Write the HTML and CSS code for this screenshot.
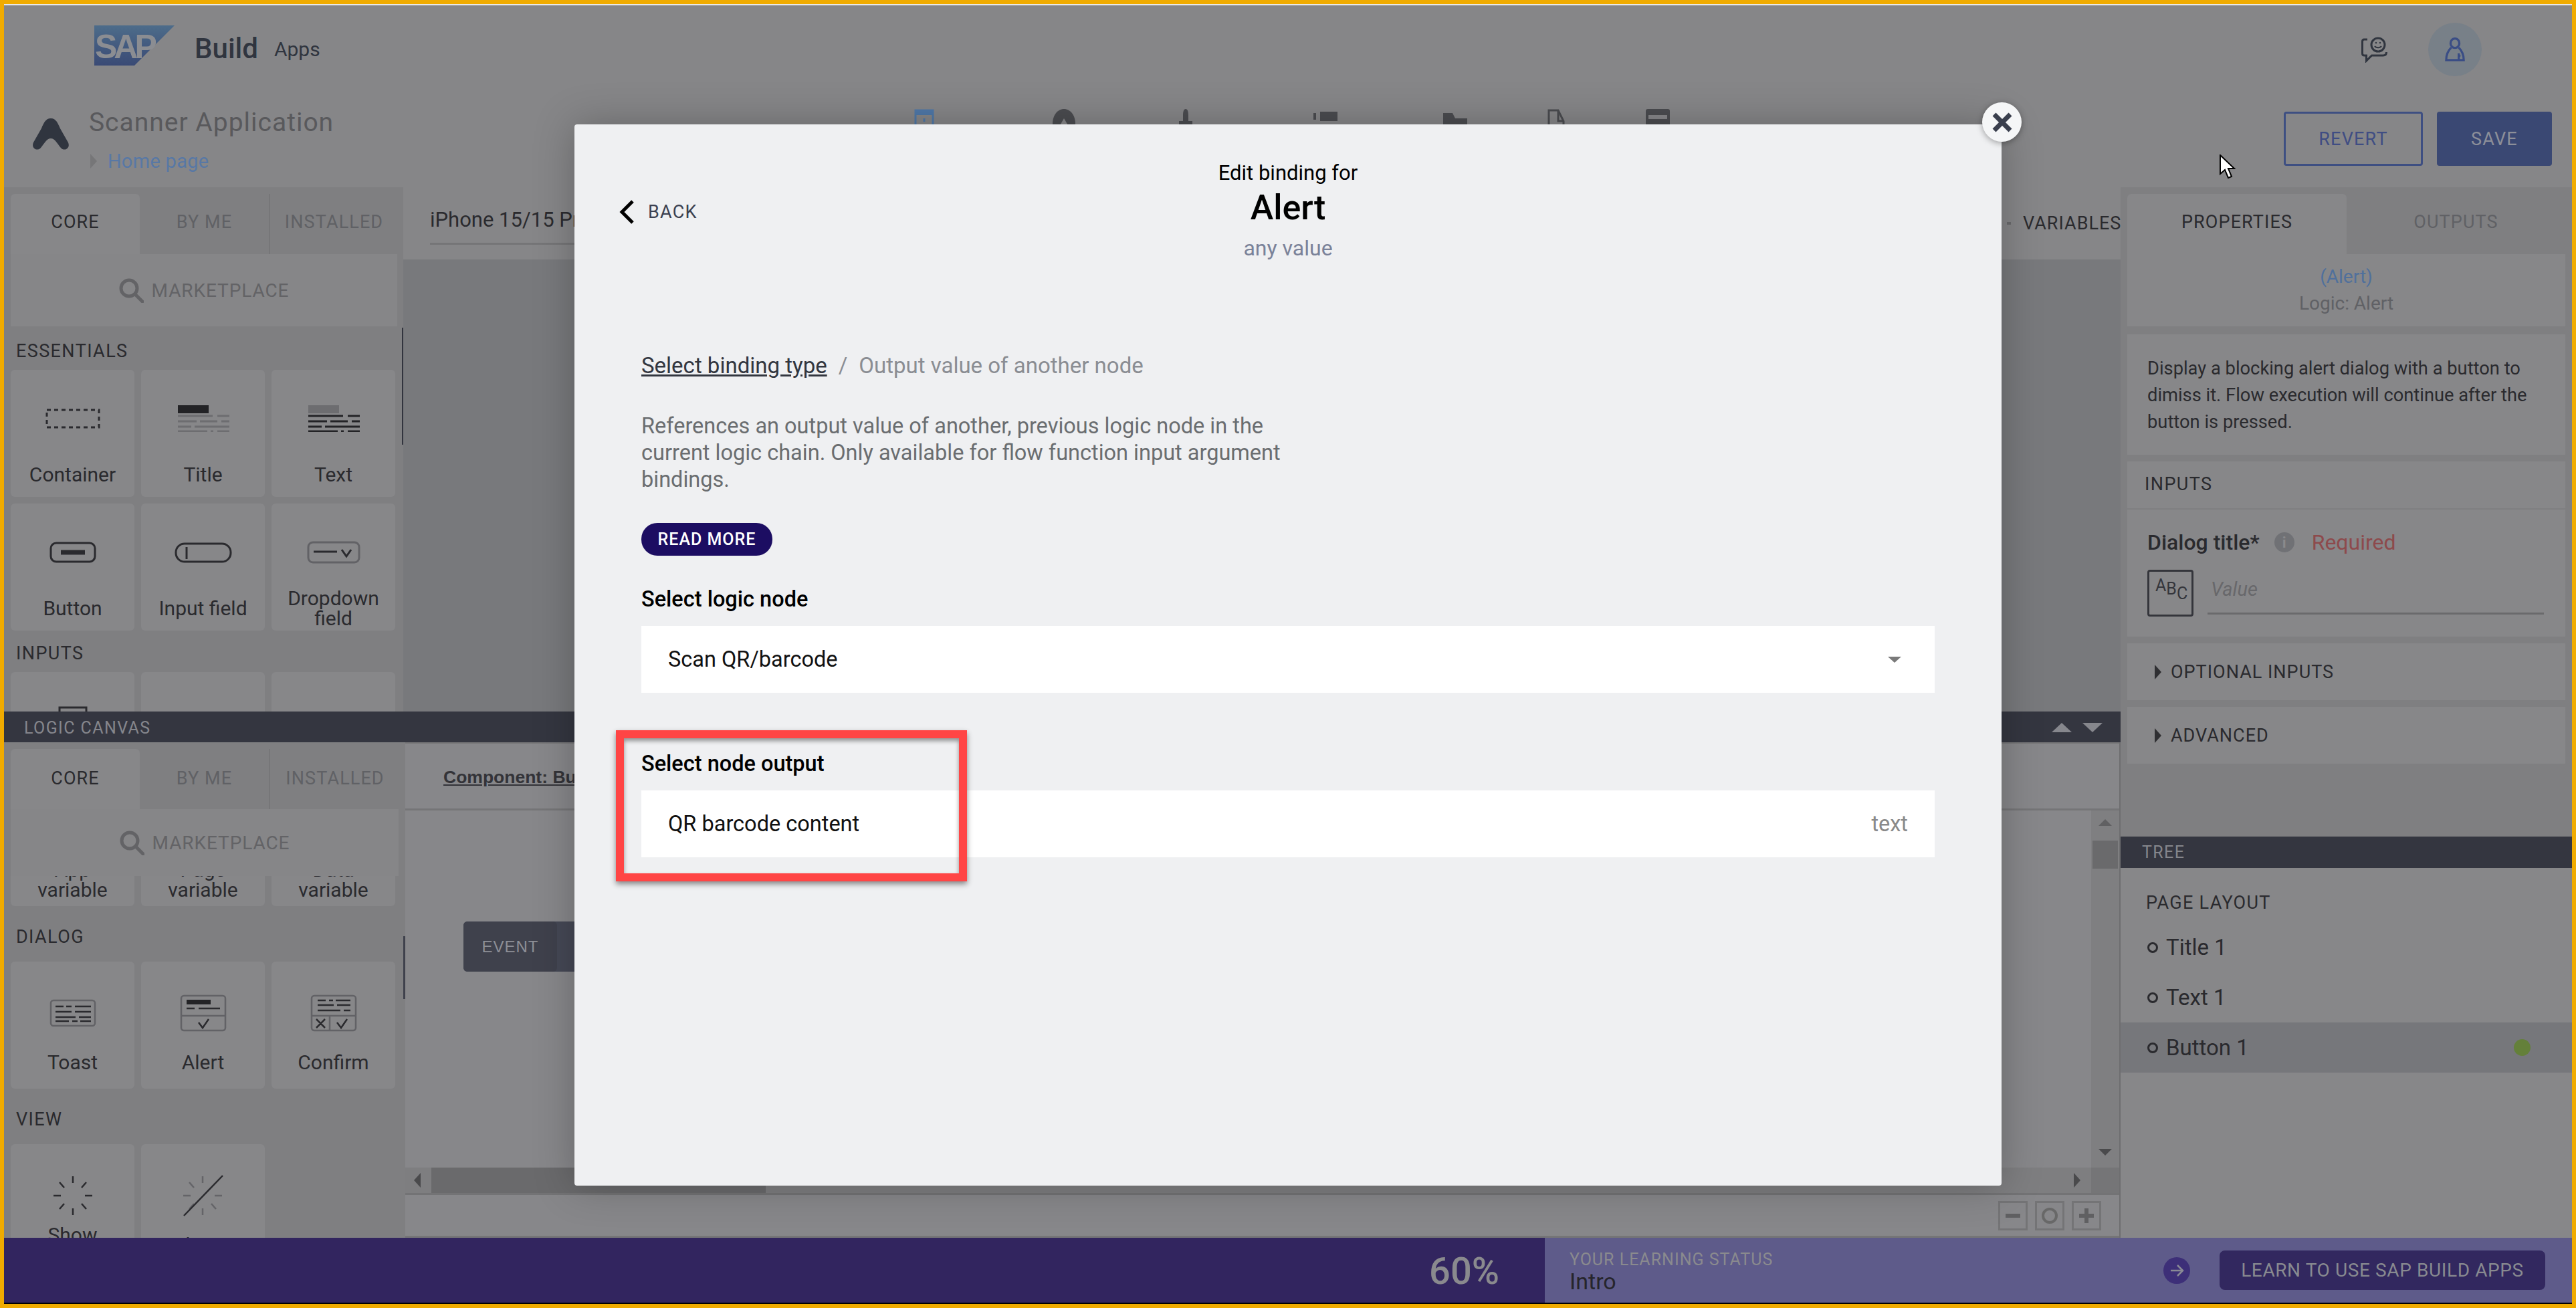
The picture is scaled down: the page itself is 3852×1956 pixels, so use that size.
FILE: index.html
```html
<!DOCTYPE html>
<html lang="en">
<head>
    <meta charset="UTF-8">
    <meta name="viewport" content="width=device-width, initial-scale=1.0">
    <title>SAP Build Apps</title>
    <link rel="stylesheet" href="styles.css">
</head>
<body>
<div class="frame">
    <header class="app-head">
        <div class="brand-row">
            <svg class="sap-logo" viewBox="0 0 120 60">
                <defs><linearGradient id="sapFill" x1="0" y1="0" x2="0" y2="1"><stop offset="0" stop-color="#4d6c8a"/><stop offset="1" stop-color="#3a4a75"/></linearGradient></defs>
                <polygon points="0,0 120,0 60,60 0,60" fill="url(#sapFill)"/>
                <text x="1" y="49" font-family="Liberation Sans" font-weight="700" font-size="50" letter-spacing="-5" fill="#8b8d92">SAP</text>
            </svg>
            <span class="brand-name">Build</span>
            <span class="brand-sub">Apps</span>
            <svg class="feedback-icon" viewBox="0 0 40 40" fill="none" stroke="#30353f" stroke-width="3">
                <circle cx="25" cy="13" r="10"/>
                <circle cx="22" cy="10" r="1.2" fill="#30353f" stroke="none"/>
                <circle cx="28" cy="10" r="1.2" fill="#30353f" stroke="none"/>
                <path d="M20 15c2 3 8 3 10 0" stroke-width="2"/>
                <path d="M9 5H4C2 5 1.500 6 1.500 8v18c0 2 1 3 3 3h3v8l8-8h17c3 0 5-1 5-5"/>
            </svg>
            <div class="avatar">
                <svg viewBox="0 0 32 38" width="30" height="36" fill="none" stroke="#3a4d85" stroke-width="3.500">
                    <ellipse cx="16" cy="9" rx="7" ry="7.500"/>
                    <path d="M10 16C4 22 2 28 2 36h28c0-8-2-14-8-20"/>
                    <path d="M22 25v11"/>
                    <circle cx="23" cy="29" r="2" fill="#3a4d85" stroke="none"/>
                </svg>
            </div>
        </div>
        <div class="app-row">
            <svg class="app-logo" viewBox="0 0 56 48"><path d="M28 0C36 0 39 8 42 15L54 36C58 45 48 50 43 44C38 38 34 30 28 30C22 30 18 38 13 44C8 50-2 45 2 36L14 15C17 8 20 0 28 0Z" fill="#30353f"/></svg>
            <div class="app-title">
                <div class="app-name">Scanner Application</div>
                <div class="app-page"><i class="tri-right tri-grey"></i>Home page</div>
            </div>
            <nav class="view-nav">
                <svg viewBox="0 0 30 40" fill="none" stroke="#4f78a8" stroke-width="3"><rect x="2" y="2" width="26" height="36"/><path d="M2 6h26" stroke-width="6"/><path d="M15 14v5M9 25v6M15 25v6M21 25v6"/></svg>
                <svg viewBox="0 0 34 40"><path d="M17 0C27 0 34 10 34 22S27 40 17 40 0 34 0 22 7 0 17 0Z" fill="#4b4c50"/><path d="M17 14l7 12h-5v12h-4V26h-5Z" fill="#87878a"/></svg>
                <svg viewBox="0 0 20 40"><path d="M10 0c3 0 4 4 4 10v8h6v12h-6v10h-2V30H8v10H6V30H0V18h6v-8c0-6 1-10 4-10Z" fill="#4b4c50"/></svg>
                <svg viewBox="0 0 36 40" fill="#4b4c50"><rect x="0" y="6" width="4" height="10"/><rect x="10" y="4" width="26" height="14"/><rect x="0" y="28" width="4" height="10"/><rect x="10" y="26" width="26" height="14"/></svg>
                <svg viewBox="0 0 36 40" fill="#4b4c50"><path d="M0 6h14l4 8h18v26H0Z"/></svg>
                <svg viewBox="0 0 26 40" fill="none" stroke="#4b4c50" stroke-width="3"><path d="M2 40V2h14l8 16v22Z"/><path d="M16 2v16h8" /></svg>
                <svg viewBox="0 0 36 40" fill="#4b4c50"><rect width="36" height="40" rx="3"/><path d="M4 12h28M4 26h28" stroke="#87878a" stroke-width="6"/></svg>
            </nav>
            <div class="head-actions">
                <button class="btn-revert">REVERT</button>
                <button class="btn-save">SAVE</button>
            </div>
        </div>
    </header>

    <div class="workspace">
        <div class="work-main">
            <section class="view-editor">
                <aside class="palette palette-scroll">
                    <div class="tabs">
                        <div class="tab active">CORE</div>
                        <div class="tab">BY ME</div>
                        <div class="tab tab-line">INSTALLED</div>
                    </div>
                    <div class="market">
                        <svg class="search-icon" viewBox="0 0 37 37" fill="none" stroke="#636366" stroke-width="5"><circle cx="15" cy="15" r="12"/><path d="M24 24l11 11" stroke-linecap="round"/></svg>
                        MARKETPLACE
                    </div>
                    <div class="palette-list">
                        <div class="section-label section-first">ESSENTIALS</div>
                        <div class="card-grid">
                            <div class="card">
                                <div class="card-icon"><svg width="82" height="30" fill="none" stroke="#2a2a2e" stroke-width="3" stroke-dasharray="6 5"><rect x="2" y="2" width="78" height="26"/></svg></div>
                                <div class="card-label">Container</div>
                            </div>
                            <div class="card">
                                <div class="card-icon"><svg width="78" height="40"><rect x="1" width="46" height="12" fill="#232326"/><path d="M1 16h52M60 16h18M1 24h28M34 24h26M66 24h12M1 32h20M26 32h52M1 39h44M50 39h4M60 39h18" stroke="#6d6d70" stroke-width="3"/></svg></div>
                                <div class="card-label">Title</div>
                            </div>
                            <div class="card">
                                <div class="card-icon"><svg width="78" height="40"><rect x="1" width="46" height="12" fill="#6d6d70"/><path d="M1 16h52M60 16h18M1 24h28M34 24h26M66 24h12M1 32h20M26 32h52M1 39h44M50 39h4M60 39h18" stroke="#232326" stroke-width="3"/></svg></div>
                                <div class="card-label">Text</div>
                            </div>
                            <div class="card">
                                <div class="card-icon"><svg width="70" height="32" fill="none" stroke="#2a2a2e" stroke-width="3"><rect x="2" y="2" width="66" height="28" rx="8"/><path d="M17 16h36" stroke-width="7"/></svg></div>
                                <div class="card-label">Button</div>
                            </div>
                            <div class="card">
                                <div class="card-icon"><svg width="86" height="32" fill="none" stroke="#2a2a2e" stroke-width="3"><rect x="2" y="3" width="82" height="27" rx="13"/><path d="M18 8v18"/></svg></div>
                                <div class="card-label">Input field</div>
                            </div>
                            <div class="card">
                                <div class="card-icon"><svg width="80" height="34" fill="none" stroke="#2a2a2e" stroke-width="3"><rect x="2" y="2" width="76" height="30" rx="7" stroke="#626266"/><path d="M10 16h35M52 13l7 10 7-10"/></svg></div>
                                <div class="card-label">Dropdown field</div>
                            </div>
                        </div>
                        <div class="section-label">INPUTS</div>
                        <div class="card-grid">
                            <div class="card"><div class="card-icon"><svg width="44" height="60" fill="none" stroke="#2a2a2e" stroke-width="3"><rect x="2" y="10" width="40" height="48"/></svg></div></div>
                            <div class="card"></div>
                            <div class="card"></div>
                        </div>
                    </div>
                </aside>
                <div class="device-pane">
                    <div class="device-bar">
                        <div class="device-select">iPhone 15/15 Pro</div>
                        <div class="variables-tab">VARIABLES</div>
                    </div>
                    <div class="device-canvas"></div>
                </div>
            </section>

            <div class="logic-bar">
                <span>LOGIC CANVAS</span>
                <span class="logic-bar-arrows"><i class="tri-up"></i><i class="tri-down"></i></span>
            </div>

            <section class="logic-editor">
                <aside class="palette palette-logic">
                    <div class="tabs">
                        <div class="tab active">CORE</div>
                        <div class="tab">BY ME</div>
                        <div class="tab tab-line">INSTALLED</div>
                    </div>
                    <div class="market">
                        <svg class="search-icon" viewBox="0 0 37 37" fill="none" stroke="#636366" stroke-width="5"><circle cx="15" cy="15" r="12"/><path d="M24 24l11 11" stroke-linecap="round"/></svg>
                        MARKETPLACE
                    </div>
                    <div class="palette-list">
                        <div class="card-grid card-grid-cut">
                            <div class="card card-short"><div class="card-label">App variable</div></div>
                            <div class="card card-short"><div class="card-label">Page variable</div></div>
                            <div class="card card-short"><div class="card-label">Data variable</div></div>
                        </div>
                        <div class="section-label section-wide">DIALOG</div>
                        <div class="card-grid">
                            <div class="card card-short">
                                <div class="card-icon"><svg width="70" height="42" fill="none" stroke="#2a2a2e" stroke-width="2.500"><rect x="2" y="2" width="66" height="38" rx="4" stroke="#626266"/><path d="M9 11h12M25 11h8M38 11h24M9 19h24M38 19h24M9 27h30M44 27h18M9 33h20M34 33h8M46 33h16"/></svg></div>
                                <div class="card-label">Toast</div>
                            </div>
                            <div class="card card-short">
                                <div class="card-icon"><svg width="70" height="56" fill="none" stroke="#2a2a2e" stroke-width="2.500"><rect x="2" y="2" width="66" height="52" rx="4" stroke="#626266"/><path d="M2 32h66" stroke="#626266"/><rect x="10" y="8" width="36" height="7" fill="#232326" stroke="none"/><path d="M10 21h12M28 21h32M28 42l6 8 9-13"/></svg></div>
                                <div class="card-label">Alert</div>
                            </div>
                            <div class="card card-short">
                                <div class="card-icon"><svg width="70" height="56" fill="none" stroke="#2a2a2e" stroke-width="2.500"><rect x="2" y="2" width="66" height="52" rx="4" stroke="#626266"/><path d="M2 32h66M29 32v22" stroke="#626266"/><path d="M11 9h12M28 9h6M38 9h22M11 16h24M40 16h20M11 24h34M50 24h10M9 37l13 13M22 37L9 50M40 42l6 8 9-13"/></svg></div>
                                <div class="card-label">Confirm</div>
                            </div>
                        </div>
                        <div class="section-label section-wide">VIEW</div>
                        <div class="card-grid">
                            <div class="card card-short">
                                <div class="card-icon"><svg width="60" height="60" stroke="#2a2a2e" stroke-width="2.500"><path d="M30 1v10M30 49v10M1 30h11M48 30h11M10 10l7 8M50 10l-7 8M10 50l7-8M50 50l-7-8"/></svg></div>
                                <div class="card-label">Show<br>view</div>
                            </div>
                            <div class="card card-short">
                                <div class="card-icon"><svg width="62" height="62" stroke="#646468" stroke-width="2.500"><path d="M30 2v10M30 50v10M1 31h11M48 31h11M10 11l7 8M50 51l-7-8M10 51l7-8"/><path d="M2 61L60 1" stroke="#2a2a2e"/></svg></div>
                                <div class="card-label">Hide view</div>
                            </div>
                        </div>
                    </div>
                </aside>
                <div class="logic-main">
                    <div class="logic-head">Component: Button 1</div>
                    <div class="logic-body">
                        <div class="logic-canvas">
                            <div class="event-node"><span class="event-tag">EVENT</span></div>
                        </div>
                        <div class="vscroll">
                            <i class="tri-up tri-small"></i>
                            <div class="vscroll-thumb"></div>
                            <i class="tri-down tri-small tri-end"></i>
                        </div>
                    </div>
                    <div class="hscroll">
                        <i class="tri-left"></i>
                        <div class="hscroll-thumb"></div>
                        <i class="tri-right tri-dark"></i>
                        <div class="hscroll-corner"></div>
                    </div>
                    <div class="zoom-row">
                        <div class="zoom-btn"><b class="zoom-minus"></b></div>
                        <div class="zoom-btn"><b class="zoom-circle"></b></div>
                        <div class="zoom-btn"><b class="zoom-minus"></b><b class="zoom-plus"></b></div>
                    </div>
                </div>
            </section>
        </div>

        <aside class="side">
            <div class="side-props">
                <div class="tabs tabs-side">
                    <div class="tab active">PROPERTIES</div>
                    <div class="tab">OUTPUTS</div>
                </div>
                <div class="prop-box prop-info">
                    <div class="prop-alert">(Alert)</div>
                    <div>Logic: Alert</div>
                </div>
                <div class="prop-box prop-desc">Display a blocking alert dialog with a button to dimiss it. Flow execution will continue after the button is pressed.</div>
                <div class="prop-box prop-inputs">INPUTS</div>
                <div class="prop-box prop-field">
                    <div class="field-head">
                        <b>Dialog title*</b>
                        <span class="info-dot">i</span>
                        <span class="field-req">Required</span>
                    </div>
                    <div class="field-row">
                        <div class="abc-box"><span>A</span><span class="abc-b">B</span><span class="abc-c">C</span></div>
                        <div class="field-value">Value</div>
                    </div>
                </div>
                <div class="prop-box prop-fold"><i class="tri-right tri-dark"></i>OPTIONAL INPUTS</div>
                <div class="prop-box prop-fold"><i class="tri-right tri-dark"></i>ADVANCED</div>
            </div>
            <div class="tree-bar">TREE</div>
            <div class="tree">
                <div class="tree-title">PAGE LAYOUT</div>
                <div class="tree-row"><i class="tree-dot"></i>Title 1</div>
                <div class="tree-row"><i class="tree-dot"></i>Text 1</div>
                <div class="tree-row tree-selected"><i class="tree-dot"></i>Button 1<i class="tree-status"></i></div>
            </div>
        </aside>
    </div>

    <footer class="learn-bar">
        <div class="learn-percent">60%</div>
        <div class="learn-status">
            <div class="learn-text">
                <div class="learn-label">YOUR LEARNING STATUS</div>
                <div class="learn-step">Intro</div>
            </div>
            <div class="learn-arrow"><svg width="24" height="24" fill="none" stroke="#8a8a95" stroke-width="2.500"><path d="M3 12h18M13 4l8 8-8 8"/></svg></div>
            <button class="learn-btn">LEARN TO USE SAP BUILD APPS</button>
        </div>
    </footer>
</div>

<div class="modal">
    <div class="modal-head">
        <div class="modal-back">
            <svg width="24" height="36" fill="none" stroke="#000" stroke-width="5"><path d="M21 2L5 18l16 16"/></svg>
            BACK
        </div>
        <div class="modal-sup">Edit binding for</div>
        <div class="modal-title">Alert</div>
        <div class="modal-type">any value</div>
    </div>
    <div class="crumbs"><a>Select binding type</a><span class="crumb-sep">/</span><span>Output value of another node</span></div>
    <p class="modal-desc">References an output value of another, previous logic node in the<br>current logic chain. Only available for flow function input argument<br>bindings.</p>
    <button class="read-more">READ MORE</button>
    <div class="select-label select-label-first">Select logic node</div>
    <div class="select-box">Scan QR/barcode<i class="select-caret"></i></div>
    <div class="select-label select-label-second">Select node output</div>
    <div class="select-box">QR barcode content<span class="select-type">text</span></div>
</div>
<div class="modal-close"><svg width="30" height="30" stroke="#3a3f4d" stroke-width="7"><path d="M3 3l24 24M27 3L3 27"/></svg></div>
<div class="highlight"></div>
<svg class="cursor" width="26" height="38" viewBox="0 0 26 38"><path d="M2 1v28l7-6 5 12 5-2-5-12h9Z" fill="#fff" stroke="#000" stroke-width="2"/></svg>
</body>
</html>
```

FILE: styles.css
```css
* { margin: 0; padding: 0; box-sizing: border-box; }
html, body { width: 3852px; height: 1956px; overflow: hidden; }
body { font-family: Roboto, Arial, sans-serif; color: #2a2a2e; font-size: 28px; position: relative; background: #868688; }
i { display: block; font-style: normal; }

.frame { width: 3852px; height: 1956px; border: 6px solid #f0ab00; display: flex; flex-direction: column; background: #868688; }

/* Top header */
.app-head { height: 274px; border-top: 2px solid #e8e8e8; flex: none; }
.brand-row { height: 132px; display: flex; align-items: center; padding: 0 135px 0 135px; }
.sap-logo { width: 120px; height: 60px; margin-bottom: 12px; }
.brand-name { font-size: 42px; font-weight: 500; color: #30353f; margin-left: 30px; margin-bottom: 4px; }
.brand-sub { font-size: 30px; color: #30353f; margin-left: 24px; margin-bottom: 2px; }
.feedback-icon { width: 40px; height: 40px; margin-left: auto; }
.avatar { width: 80px; height: 80px; border-radius: 50%; background: #788088; margin-left: 60px; display: flex; align-items: center; justify-content: center; }

.app-row { height: 140px; display: flex; padding: 0 30px 0 42px; }
.app-logo { width: 56px; height: 48px; margin-top: 37px; }
.app-title { width: 1266px; padding: 17px 0 0 29px; }
.app-name { font-size: 39px; letter-spacing: 1px; color: #59595c; line-height: 52px; }
.app-page { font-size: 29px; letter-spacing: 0.3px; color: #5878a5; line-height: 40px; display: flex; align-items: center; margin-top: 12px; padding-left: 2px; }
.app-page .tri-right { margin-right: 16px; }

.view-nav { width: 2052px; display: grid; grid-template-columns: 207px 189px 201px 194px 156px 147px 40px; padding-top: 23px; align-items: start; }
.view-nav svg { height: 40px; }
.head-actions { display: flex; gap: 21px; padding-top: 27px; margin-left: auto; align-items: flex-start; }
.head-actions button { height: 81px; font-family: inherit; font-size: 27px; letter-spacing: 1.2px; border-radius: 4px; }
.btn-revert { width: 208px; background: none; border: 3px solid #3e4f82; color: #3f4d83; }
.btn-save { width: 172px; background: #3a4873; border: none; color: #8c8f99; }

/* Work area */
.workspace { flex: 1; display: flex; min-height: 0; }
.work-main { flex: 1; display: flex; flex-direction: column; min-width: 0; }
.view-editor { height: 784px; display: flex; flex: none; }
.logic-bar { height: 46px; flex: none; background: #343640; color: #85868c; font-size: 25px; letter-spacing: 1.4px; padding: 2px 27px 0 30px; display: flex; justify-content: space-between; align-items: center; }
.logic-bar-arrows { display: flex; gap: 16px; }
.logic-editor { flex: 1; display: flex; min-height: 0; }

/* Component palette */
.palette { width: 597px; background: #7f7f81; display: flex; flex-direction: column; flex: none; padding-top: 10px; position: relative; }
.palette-logic { width: 600px; }
.palette-scroll::after { content: ""; position: absolute; right: 0; top: 210px; width: 2px; height: 175px; background: #32343e; }
.palette-logic::after { content: ""; position: absolute; right: 0; top: 290px; width: 3px; height: 94px; background: #3f414c; }
.tabs { display: grid; grid-template-columns: 193px 193px 1fr; height: 90px; flex: none; padding-left: 10px; }
.tab { display: flex; align-items: center; justify-content: center; color: #606165; font-size: 27px; letter-spacing: 1.1px; padding-bottom: 6px; }
.palette-logic .tab { padding-bottom: 3px; }
.tab.active { background: #878789; color: #2a2a2e; border-radius: 6px 6px 0 0; }
.tab-line { border-left: 2px solid #767678; padding-right: 8px; }
.market { height: 108px; margin: 0 9px 0 10px; background: #868688; color: #636366; font-size: 28px; letter-spacing: 0.9px; display: flex; align-items: center; justify-content: center; gap: 12px; flex: none; }
.palette-logic .market { height: 100px; margin-right: 10px; }
.search-icon { width: 37px; height: 37px; }
.palette-list { flex: 1; overflow: hidden; min-height: 0; }

.section-label { height: 62px; line-height: 68px; padding-left: 18px; font-size: 27px; letter-spacing: 1.4px; color: #2a2a2e; }
.section-first { height: 65px; line-height: 74px; }
.section-wide { height: 83px; line-height: 92px; }
.card-grid { display: grid; grid-template-columns: repeat(3, 185px); gap: 10px; padding-left: 10px; }
.card-grid-cut { margin-top: -145px; }
.card-grid-cut .card-label { margin-top: 121px; }
.card { height: 190px; background: #878789; border-radius: 6px; }
.card-icon { height: 127px; padding-top: 19px; display: flex; align-items: center; justify-content: center; }
.card-label { height: 60px; display: flex; align-items: center; justify-content: center; text-align: center; line-height: 30px; font-size: 30px; color: #2a2a2e; padding: 0 20px; }
.card-short .card-icon { height: 121px; padding-top: 33px; }

/* Device preview */
.device-pane { flex: 1; display: flex; flex-direction: column; min-width: 0; }
.device-bar { height: 108px; flex: none; background: #868688; display: flex; justify-content: space-between; padding-left: 40px; }
.device-select { width: 500px; height: 86px; border-bottom: 3px solid #757577; display: flex; align-items: center; font-size: 31px; padding-top: 13px; }
.variables-tab { display: flex; align-items: center; font-size: 27px; letter-spacing: 1px; width: 146px; white-space: nowrap; position: relative; }
.variables-tab::before { content: ""; position: absolute; left: -24px; top: 52px; width: 6px; height: 4px; background: #6a6a6c; }
.device-canvas { flex: 1; background: #78797c; }

/* Logic canvas */
.logic-main { flex: 1; display: flex; flex-direction: column; min-width: 0; background: #87878a; border-right: 2px solid #6e6e70; }
.logic-head { height: 102px; flex: none; padding-left: 57px; padding-top: 35px; font-family: "Liberation Sans", Arial, sans-serif; font-weight: 700; font-size: 26.500px; text-decoration: underline; color: #333338; border-bottom: 3px solid #757577; border-top: 2px solid #757577; }
.logic-body { flex: 1; display: flex; min-height: 0; }
.logic-canvas { flex: 1; position: relative; }
.event-node { position: absolute; left: 87px; top: 166px; width: 600px; height: 75px; background: #454855; border-radius: 6px; }
.event-tag { display: flex; width: 140px; height: 75px; background: #3f414c; border-radius: 6px; align-items: center; justify-content: center; color: #8d8f96; font-size: 24px; font-family: "Liberation Sans", Arial, sans-serif; letter-spacing: 1px; }
.vscroll { width: 42px; flex: none; background: #7f7f81; display: flex; flex-direction: column; align-items: center; padding: 13px 0 18px; }
.vscroll-thumb { width: 38px; height: 42px; background: #6a6a6c; margin-top: 22px; }
.tri-end { margin-top: auto; }
.hscroll { height: 41px; flex: none; background: #7e7e80; border-bottom: 3px solid #737375; display: flex; align-items: center; padding-left: 13px; }
.hscroll-thumb { width: 500px; height: 38px; background: #6a6a6c; margin-left: 16px; }
.hscroll .tri-dark { margin-left: auto; margin-right: 16px; }
.hscroll-corner { width: 42px; height: 38px; background: #757577; }
.zoom-row { height: 64px; flex: none; display: flex; justify-content: flex-end; gap: 11px; padding: 9px 27px 0 0; border-bottom: 3px solid #757577; }
.zoom-btn { width: 44px; height: 44px; border: 3px solid #747476; position: relative; display: flex; align-items: center; justify-content: center; }
.zoom-minus { width: 22px; height: 6px; background: #606062; }
.zoom-plus { position: absolute; left: 16px; top: 8px; width: 6px; height: 22px; background: #606062; }
.zoom-circle { width: 24px; height: 24px; border: 4px solid #686868; border-radius: 50%; }

/* Triangles */
.tri-right { width: 0; height: 0; border-style: solid; border-width: 11px 0 11px 10px; border-color: transparent transparent transparent #2a2a2e; flex: none; }
.tri-grey { border-left-color: #767678; }
.tri-dark { border-left-color: #2f2f32; }
.hscroll .tri-dark { border-left-color: #4a4a4c; }
.tri-left { width: 0; height: 0; border-style: solid; border-width: 11px 10px 11px 0; border-color: transparent #4a4a4c transparent transparent; flex: none; }
.tri-up { width: 0; height: 0; border-style: solid; border-width: 0 15px 14px 15px; border-color: transparent transparent #86878d transparent; }
.tri-down { width: 0; height: 0; border-style: solid; border-width: 14px 15px 0 15px; border-color: #86878d transparent transparent transparent; }
.tri-small.tri-up { border-width: 0 10px 10px 10px; border-bottom-color: #606062; }
.tri-small.tri-down { border-width: 10px 10px 0 10px; border-top-color: #4a4a4c; }

/* Right side */
.side { width: 675px; flex: none; display: flex; flex-direction: column; background: #7f7f81; }
.side-props { height: 971px; flex: none; padding-top: 10px; }
.tabs-side { grid-template-columns: 328px 1fr; }
.tabs-side .tab:last-child { padding-right: 10px; }
.prop-box { margin: 0 10px; background: #878789; }
.prop-info { height: 108px; margin-bottom: 12px; text-align: center; color: #606165; font-size: 28px; line-height: 40px; padding-top: 14px; }
.prop-alert { color: #50709c; }
.prop-desc { height: 180px; padding: 31px 30px 0; line-height: 40px; font-size: 27.300px; margin-bottom: 10px; }
.prop-inputs { height: 70px; padding-left: 26px; line-height: 68px; margin-bottom: 2px; font-size: 27px; letter-spacing: 1.4px; }
.prop-field { height: 190px; padding: 26px 30px 0; margin-bottom: 10px; }
.field-head { display: flex; align-items: center; height: 46px; }
.field-head b { font-size: 32px; font-weight: 500; }
.info-dot { width: 30px; height: 30px; border-radius: 50%; background: #707175; color: #8a8a8c; font-size: 22px; font-weight: 700; display: flex; align-items: center; justify-content: center; margin-left: 22px; }
.field-req { color: #8d4a4c; font-size: 32px; margin-left: 26px; }
.field-row { display: flex; margin-top: 18px; }
.abc-box { width: 69px; height: 70px; border: 3px solid #34353b; border-radius: 4px; font-size: 25px; color: #34353b; padding: 6px 0 0 9px; display: flex; line-height: 30px; }
.abc-b { padding-top: 5px; }
.abc-c { padding-top: 12px; }
.field-value { width: 503px; height: 67px; margin-left: 21px; padding-left: 5px; border-bottom: 3px solid #6a6a6c; font-style: italic; color: #68686b; font-size: 29px; line-height: 58px; }
.prop-fold { height: 85px; display: flex; align-items: center; padding-left: 41px; gap: 14px; margin-bottom: 10px; font-size: 27px; letter-spacing: 1px; }
.tree-bar { height: 47px; flex: none; background: #343640; color: #85868c; font-size: 25px; letter-spacing: 1.4px; padding-left: 32px; line-height: 47px; }
.tree { flex: 1; background: #878789; }
.tree-title { padding: 33px 0 0 38px; height: 81px; font-size: 27px; letter-spacing: 1.3px; line-height: 38px; }
.tree-row { height: 75px; display: flex; align-items: center; padding-left: 40px; font-size: 33px; }
.tree-selected { background: #76777b; }
.tree-dot { width: 16px; height: 16px; border: 3px solid #2a2a2e; border-radius: 50%; margin-right: 12px; }
.tree-status { width: 25px; height: 25px; border-radius: 50%; background: #64803a; margin-left: auto; margin-right: 62px; }

/* Learning bar */
.learn-bar { height: 99px; flex: none; display: flex; border-bottom: 2px solid #000; }
.learn-percent { width: 2304px; flex: none; background: #32255f; color: #8a8a8e; font-size: 56px; font-weight: 500; display: flex; align-items: center; justify-content: flex-end; padding: 3px 68px 0 0; }
.learn-status { flex: 1; background: #5e5b8a; display: flex; align-items: center; padding: 0 40px 0 37px; }
.learn-text { padding-top: 3px; }
.learn-label { font-size: 25px; letter-spacing: 1px; color: #8a8a8e; line-height: 30px; }
.learn-step { font-size: 34px; color: #26252b; line-height: 34px; }
.learn-arrow { width: 40px; height: 40px; margin-left: auto; border-radius: 50%; background: #3d2f78; display: flex; align-items: center; justify-content: center; }
.learn-btn { width: 487px; height: 59px; margin-left: 44px; background: #32285f; border: none; border-radius: 8px; color: #888a90; font-family: inherit; font-size: 28px; letter-spacing: 0.6px; }

/* Dialog */
.modal { position: absolute; left: 859px; top: 186px; width: 2134px; height: 1587px; background: #eff0f2; border-radius: 4px; box-shadow: 0 0 60px rgba(0, 0, 0, 0.25); padding: 0 100px; }
.modal-head { height: 275px; padding-top: 55px; text-align: center; position: relative; }
.modal-back { position: absolute; left: -34px; top: 113px; display: flex; align-items: center; gap: 20px; font-size: 27px; letter-spacing: 1.2px; color: #3a4050; }
.modal-sup { font-size: 31px; color: #000; line-height: 36px; }
.modal-title { font-size: 52px; font-weight: 500; color: #000; line-height: 68px; }
.modal-type { font-size: 32px; color: #7a8299; line-height: 52px; }
.crumbs { font-size: 33px; color: #8a8d93; height: 46px; line-height: 46px; margin-top: 63px; display: flex; }
.crumbs a { color: #32363f; text-decoration: underline; }
.crumb-sep { margin: 0 17px; }
.modal-desc { font-size: 32.500px; color: #6a6d70; line-height: 40px; margin-top: 47px; }
.read-more { display: block; width: 196px; height: 49px; margin-top: 45px; background: #1c0d62; border: none; border-radius: 24px; color: #fff; font-family: inherit; font-size: 25px; font-weight: 500; letter-spacing: 1px; }
.select-label { font-size: 32.500px; font-weight: 500; color: #000; height: 40px; line-height: 40px; }
.select-label-first { margin-top: 45px; }
.select-label-second { margin-top: 86px; }
.select-box { height: 100px; margin-top: 20px; background: #fff; display: flex; align-items: center; justify-content: space-between; padding: 0 40px; font-size: 32.500px; color: #111; }
.select-caret { width: 0; height: 0; border-style: solid; border-width: 9px 10px 0 10px; border-color: #7a7a7a transparent transparent transparent; margin-right: 10px; }
.select-type { color: #8a8a8a; }
.modal-close { position: absolute; left: 2964px; top: 153px; width: 59px; height: 59px; border-radius: 50%; background: #f5f6f7; box-shadow: 0 2px 10px rgba(0, 0, 0, 0.35); display: flex; align-items: center; justify-content: center; }
.highlight { position: absolute; left: 921px; top: 1092px; width: 525px; height: 226px; border: 12px solid #ff4545; box-shadow: 0 4px 8px rgba(0, 0, 0, 0.45), inset 0 4px 6px rgba(0, 0, 0, 0.4); }
.cursor { position: absolute; left: 3318px; top: 231px; }
```
